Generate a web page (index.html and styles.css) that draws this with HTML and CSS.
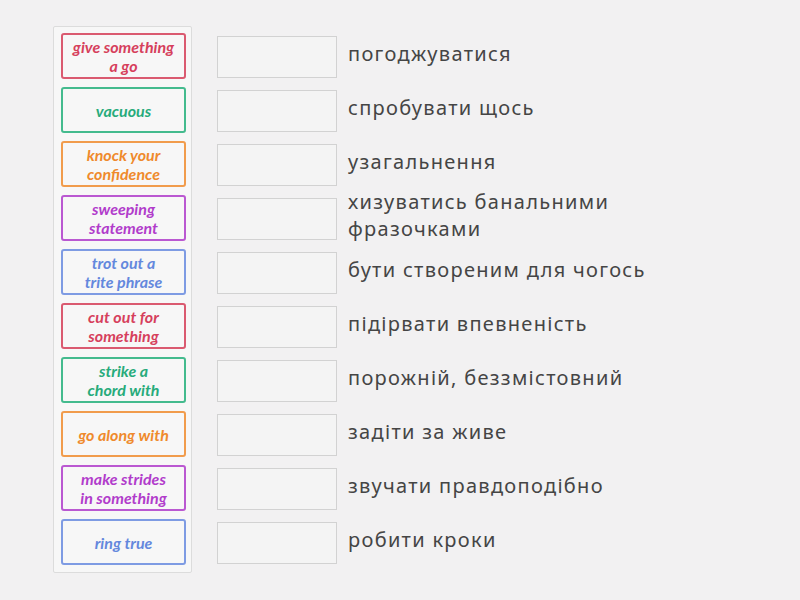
FILE: index.html
```html
<!DOCTYPE html>
<html>
<head>
  <meta charset="utf-8">
  <title>Match up</title>
  <link rel="stylesheet" href="styles.css">
</head>
<body>
  <div class="board">
    <div class="tray">
      <div class="card red">give something<br>a go</div>
      <div class="card green">vacuous</div>
      <div class="card orange">knock your<br>confidence</div>
      <div class="card purple">sweeping<br>statement</div>
      <div class="card blue">trot out a<br>trite phrase</div>
      <div class="card red">cut out for<br>something</div>
      <div class="card green">strike a<br>chord with</div>
      <div class="card orange">go along with</div>
      <div class="card purple">make strides<br>in something</div>
      <div class="card blue">ring true</div>
    </div>

    <div class="targets">
      <div class="row"><div class="slot"></div><div class="label">погоджуватися</div></div>
      <div class="row"><div class="slot"></div><div class="label">спробувати щось</div></div>
      <div class="row"><div class="slot"></div><div class="label">узагальнення</div></div>
      <div class="row"><div class="slot"></div><div class="label">хизуватись банальними фразочками</div></div>
      <div class="row"><div class="slot"></div><div class="label">бути створеним для чогось</div></div>
      <div class="row"><div class="slot"></div><div class="label">підірвати впевненість</div></div>
      <div class="row"><div class="slot"></div><div class="label">порожній, беззмістовний</div></div>
      <div class="row"><div class="slot"></div><div class="label">задіти за живе</div></div>
      <div class="row"><div class="slot"></div><div class="label">звучати правдоподібно</div></div>
      <div class="row"><div class="slot"></div><div class="label">робити кроки</div></div>
    </div>
  </div>
</body>
</html>
```

FILE: styles.css
```css
body {
  margin: 0;
  background-color: #f2f1f2;
  font-family: 'Noto Sans', 'DejaVu Sans', sans-serif;
}

.board {
  display: flex;
  align-items: flex-start;
  padding: 26px 0 0 53px;
}

.tray {
  display: flex;
  flex-direction: column;
  gap: 8px;
  width: 125px;
  padding: 6px 5px 7px 7px;
  background-color: #f7f7f7;
  border: 1px solid #dcdcdc;
  border-radius: 2px;
}

.card {
  box-sizing: border-box;
  height: 46px;
  display: flex;
  align-items: center;
  justify-content: center;
  text-align: center;
  white-space: nowrap;
  font-family: Lato, sans-serif;
  font-style: italic;
  font-weight: bold;
  font-size: 16px;
  line-height: 19px;
  background-color: #f7f7f7;
  border: 2px solid;
  border-radius: 3px;
}

.card.red { color: #d6405c; border-color: #da5a70; }
.card.green { color: #27ab7b; border-color: #44bb8e; }
.card.orange { color: #ef8a2c; border-color: #f19c4c; }
.card.purple { color: #b13ccb; border-color: #ba58d1; }
.card.blue { color: #6488dd; border-color: #7e9be3; }

.targets {
  display: flex;
  flex-direction: column;
  gap: 8px;
  margin: 7px 0 0 25px;
}

.row {
  display: flex;
  align-items: flex-start;
  height: 46px;
}

.slot {
  flex: none;
  box-sizing: border-box;
  width: 120px;
  height: 42px;
  margin-top: 3px;
  background-color: #f4f4f4;
  border: 1px solid #d2d2d2;
}

.label {
  width: 300px;
  margin-left: 11px;
  align-self: center;
  margin-bottom: 6px;
  font-size: 20px;
  line-height: 27px;
  letter-spacing: 1.3px;
  color: #454545;
}
```
